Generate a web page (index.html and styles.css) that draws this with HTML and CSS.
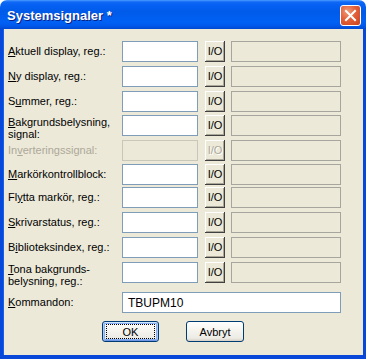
FILE: index.html
```html
<!DOCTYPE html>
<html>
<head>
<meta charset="utf-8">
<link rel="stylesheet" href="styles.css">
</head>
<body>
<div class="window">
  <div class="titlebar">
    <span class="title">Systemsignaler *</span>
    <span class="close"><svg width="13" height="13" viewBox="0 0 13 13"><path d="M2 2 L11 11 M11 2 L2 11" stroke="#fff" stroke-width="2" stroke-linecap="square"/></svg></span>
  </div>
  <div class="client">
    <div class="form">
      <div class="label"><u>A</u>ktuell display, reg.:</div>
      <div class="edit"></div><div class="io">I/O</div><div class="field"></div>

      <div class="label"><u>N</u>y display, reg.:</div>
      <div class="edit"></div><div class="io">I/O</div><div class="field"></div>

      <div class="label">S<u>u</u>mmer, reg.:</div>
      <div class="edit"></div><div class="io">I/O</div><div class="field"></div>

      <div class="label two"><u>B</u>akgrundsbelysning,<br>signal:</div>
      <div class="edit"></div><div class="io">I/O</div><div class="field"></div>

      <div class="label disabled">In<u>v</u>erteringssignal:</div>
      <div class="edit off"></div><div class="io disabled">I/O</div><div class="field"></div>

      <div class="label"><u>M</u>arkörkontrollblock:</div>
      <div class="edit"></div><div class="io">I/O</div><div class="field"></div>

      <div class="label">Fl<u>y</u>tta markör, reg.:</div>
      <div class="edit"></div><div class="io">I/O</div><div class="field"></div>

      <div class="label"><u>S</u>krivarstatus, reg.:</div>
      <div class="edit"></div><div class="io">I/O</div><div class="field"></div>

      <div class="label">B<u>i</u>blioteksindex, reg.:</div>
      <div class="edit"></div><div class="io">I/O</div><div class="field"></div>

      <div class="label two"><u>T</u>ona bakgrunds-<br>belysning, reg.:</div>
      <div class="edit"></div><div class="io">I/O</div><div class="field"></div>

      <div class="label"><u>K</u>ommandon:</div>
      <div class="edit wide">TBUPM10</div>
    </div>
    <div class="buttons">
      <div class="btn default"><span class="focus">OK</span></div>
      <div class="btn">Avbryt</div>
    </div>
  </div>
</div>
</body>
</html>
```
FILE: styles.css
```css
html, body {
  margin: 0;
  padding: 0;
  background: #ffffff;
}
.window {
  width: 366px;
  height: 359px;
  display: flex;
  flex-direction: column;
  font-family: "Liberation Sans", Arial, sans-serif;
  font-size: 11px;
  color: #000;
}
.titlebar {
  height: 29px;
  flex: none;
  border-radius: 7px 7px 0 0;
  background: linear-gradient(to bottom, #4a9cff 0, #0f68f5 2px, #0660f3 5px, #005be9 12px, #0061f5 22px, #0058ea 26px, #0048d0 29px);
  display: flex;
  align-items: center;
  justify-content: space-between;
  padding: 0 5px 0 7px;
  box-sizing: border-box;
}
.title {
  color: #fff;
  font-weight: bold;
  font-size: 13px;
  text-shadow: 1px 1px 0 #0a1e80;
  margin-top: 1px;
}
.close {
  width: 19px;
  height: 19px;
  border: 1px solid #fff;
  border-radius: 3px;
  background: radial-gradient(circle at 35% 30%, #f29a78 0, #e2603a 45%, #c8401c 100%);
  display: flex;
  align-items: center;
  justify-content: center;
  margin-top: 1px;
}
.client {
  flex: 1;
  background: #ece9d8;
  border-left: 3px solid #0847d8;
  border-right: 3px solid #0847d8;
  border-bottom: 4px solid #0847d8;
  box-shadow: inset 1px 0 0 #1060f0;
  padding: 12px 0 0 5px;
}
.form {
  display: grid;
  grid-template-columns: 114px 76px 7px 20px 6px 110px;
  grid-template-rows: 25px 25px 24px 25px 24px 23px 25px 25px 25px 30px 21px;
}
.form .label {
  grid-column: 1;
  padding-top: 4px;
  line-height: 13px;
  white-space: nowrap;
}
.form .label.two {
  padding-top: 1px;
  line-height: 12px;
}
.label.disabled {
  color: #aca899;
}
.edit {
  grid-column: 2;
  height: 21px;
  box-sizing: border-box;
  border: 1px solid #7f9db9;
  background: #fff;
}
.edit.off {
  background: #ece9d8;
  border-color: #c9c7ba;
}
.edit.wide {
  grid-column: 2 / 7;
  padding: 3px 0 0 5px;
  font-size: 12px;
  width: 219px;
}
.io {
  grid-column: 4;
  height: 21px;
  box-sizing: border-box;
  background: #ece9d8;
  box-shadow: inset -1px -1px 0 #404040, inset 1px 1px 0 #ffffff, inset -2px -2px 0 #aca899;
  text-align: center;
  line-height: 20px;
  font-size: 11px;
}
.io.disabled {
  color: #aca899;
  text-shadow: 1px 1px 0 #fff;
}
.field {
  grid-column: 6;
  height: 21px;
  box-sizing: border-box;
  border: 1px solid #a7a69e;
  background: #ece9d8;
}
.buttons {
  display: flex;
  gap: 27px;
  padding: 8px 0 0 94px;
}
.btn {
  width: 57px;
  height: 21px;
  box-sizing: border-box;
  border: 1px solid #003c74;
  border-radius: 3px;
  background: linear-gradient(to bottom, #ffffff 0, #f6f5f0 40%, #ecebe4 85%, #d6d0c5 100%);
  display: flex;
  align-items: center;
  justify-content: center;
  font-size: 11px;
}
.btn + .btn {
  width: 58px;
}
.btn.default {
  box-shadow: inset 0 1px 0 #cee7ff, inset 1px 0 0 #a9caf7, inset -1px 0 0 #a9caf7, inset 0 -1px 0 #6f95e5, inset 0 0 0 2px #89adf3;
}
.focus {
  border: 1px dotted #000;
  width: 47px;
  height: 13px;
  display: flex;
  align-items: center;
  justify-content: center;
}
```
